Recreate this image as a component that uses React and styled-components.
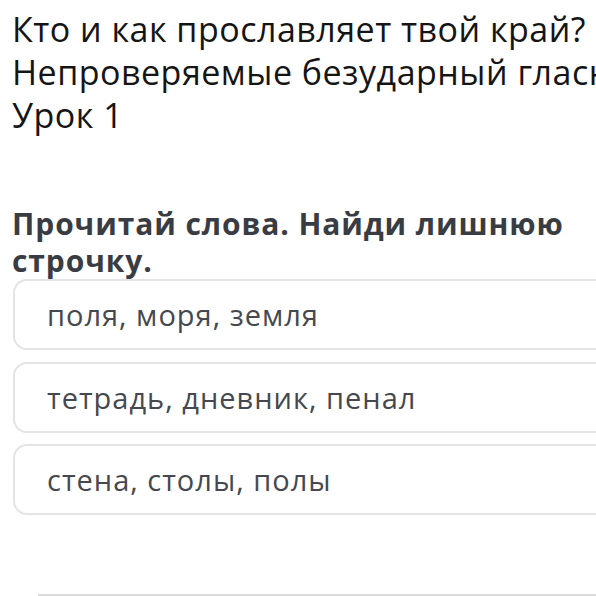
import styled, { createGlobalStyle } from 'styled-components'

const GlobalStyle = createGlobalStyle`
  body {
    margin: 0;
    background: #fff;
    font-family: "Open Sans", "Noto Sans", sans-serif;
    overflow: hidden;
  }
`

const Page = styled.div`
  width: 596px;
  height: 596px;
  overflow: hidden;
`

const Header = styled.div`
  padding: 8px 0 0 12px;
  color: #151515;
  font-size: 34px;
  line-height: 43px;
  letter-spacing: 0.5px;
`

const HeaderLine = styled.div`
  white-space: nowrap;
`

const Question = styled.h2`
  margin: 68px 0 0 12px;
  font-size: 30px;
  line-height: 37px;
  font-weight: 700;
  letter-spacing: 0.9px;
  color: #393d43;
`

const Options = styled.div`
  display: flex;
  flex-direction: column;
  gap: 11.5px;
  margin-left: 13px;
  width: 620px;
`

const Option = styled.div`
  height: 71px;
  box-sizing: border-box;
  display: flex;
  align-items: center;
  padding-left: 32px;
  border: 2px solid #e3e4e6;
  border-radius: 14px;
  font-size: 29px;
  letter-spacing: 1px;
  color: #45494f;
`

const Divider = styled.div`
  margin: 79px 0 0 38px;
  border-top: 2px solid #dcdcdc;
`

const lines = [
  'Кто и как прославляет твой край?',
  'Непроверяемые безударный гласные',
  'Урок 1'
]

const answers = ['поля, моря, земля', 'тетрадь, дневник, пенал', 'стена, столы, полы']

const App = () => (
  <Page>
    <GlobalStyle />
    <Header>
      {lines.map(line => <HeaderLine key={line}>{line}</HeaderLine>)}
    </Header>
    <Question>Прочитай слова. Найди лишнюю строчку.</Question>
    <Options>
      {answers.map(answer => <Option key={answer}>{answer}</Option>)}
    </Options>
    <Divider />
  </Page>
)

export default App
